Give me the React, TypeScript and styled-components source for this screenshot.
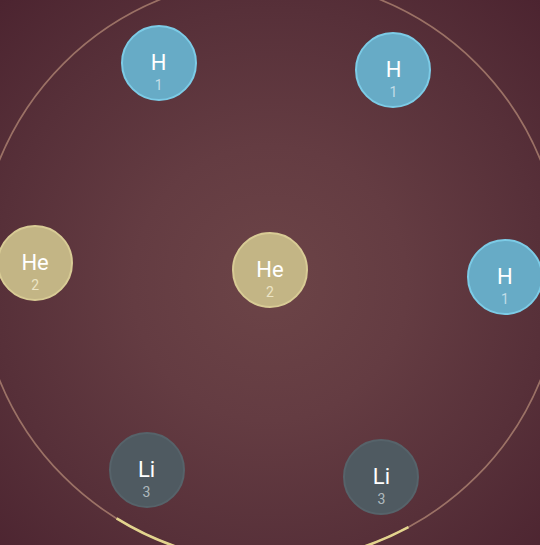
import React from "react";
import styled, { createGlobalStyle } from "styled-components";

const GlobalStyle = createGlobalStyle`
  html, body { margin: 0; padding: 0; }
  body { font-family: Roboto, "Noto Sans", sans-serif; background: #4c2530; }
`;

const Stage = styled.div`
  position: relative;
  width: 540px;
  height: 545px;
  overflow: hidden;
  background: radial-gradient(
    circle at 50% 52%,
    #6c4447 0%,
    #643c42 35%,
    #573039 70%,
    #4c2430 100%
  );
`;

const OrbitSvg = styled.svg`
  position: absolute;
  left: 0;
  top: 0;
`;

type Kind = "H" | "He" | "Li";

const palette: Record<Kind, { fill: string; ring: string; num: string }> = {
  H: { fill: "#67abc6", ring: "#7ccbe6", num: "rgba(255,255,255,0.6)" },
  He: { fill: "#c3b585", ring: "#d8cb95", num: "rgba(255,250,225,0.7)" },
  Li: { fill: "#4f5a61", ring: "#56636a", num: "rgba(220,228,232,0.7)" },
};

const Atom = styled.div<{ $kind: Kind }>`
  position: absolute;
  box-sizing: content-box;
  width: 72px;
  height: 54px;
  padding-top: 18px;
  margin: -38px 0 0 -38px;
  border-radius: 50%;
  border: 2px solid ${(p) => palette[p.$kind].ring};
  background: ${(p) => palette[p.$kind].fill};
  display: flex;
  flex-direction: column;
  align-items: center;
  justify-content: center;
  gap: 2px;
  color: #fff;
`;

const Symbol = styled.span`
  font-size: 22px;
  line-height: 24px;
`;

const Num = styled.span<{ $kind: Kind }>`
  font-size: 14px;
  line-height: 16px;
  color: ${(p) => palette[p.$kind].num};
`;

const CX = 270;
const CY = 270;
const R_ORBIT = 235;
const R_RING = 292;

const outer: { kind: Kind; n: number; deg: number }[] = [
  { kind: "H", n: 1, deg: 1.7 },
  { kind: "Li", n: 3, deg: 61.7 },
  { kind: "Li", n: 3, deg: 121.7 },
  { kind: "He", n: 2, deg: 181.7 },
  { kind: "H", n: 1, deg: 241.7 },
  { kind: "H", n: 1, deg: 301.7 },
];

const pt = (r: number, deg: number) => {
  const a = (deg * Math.PI) / 180;
  return { x: CX + r * Math.cos(a), y: CY + r * Math.sin(a) };
};

export default function App() {
  const a0 = pt(R_RING, 61.7);
  const a1 = pt(R_RING, 121.7);
  return (
    <>
      <GlobalStyle />
      <Stage>
        <OrbitSvg width={540} height={545} viewBox="0 0 540 545">
          <circle
            cx={CX}
            cy={CY}
            r={R_RING}
            fill="none"
            stroke="rgba(214,170,140,0.55)"
            strokeWidth={1.7}
          />
          <path
            d={`M ${a0.x} ${a0.y} A ${R_RING} ${R_RING} 0 0 1 ${a1.x} ${a1.y}`}
            fill="none"
            stroke="#e3d48e"
            strokeWidth={2.6}
          />
        </OrbitSvg>
        <Atom $kind="He" style={{ left: CX, top: CY }}>
          <Symbol>He</Symbol>
          <Num $kind="He">2</Num>
        </Atom>
        {outer.map((o, i) => {
          const p = pt(R_ORBIT, o.deg);
          return (
            <Atom key={i} $kind={o.kind} style={{ left: p.x, top: p.y }}>
              <Symbol>{o.kind}</Symbol>
              <Num $kind={o.kind}>{o.n}</Num>
            </Atom>
          );
        })}
      </Stage>
    </>
  );
}
